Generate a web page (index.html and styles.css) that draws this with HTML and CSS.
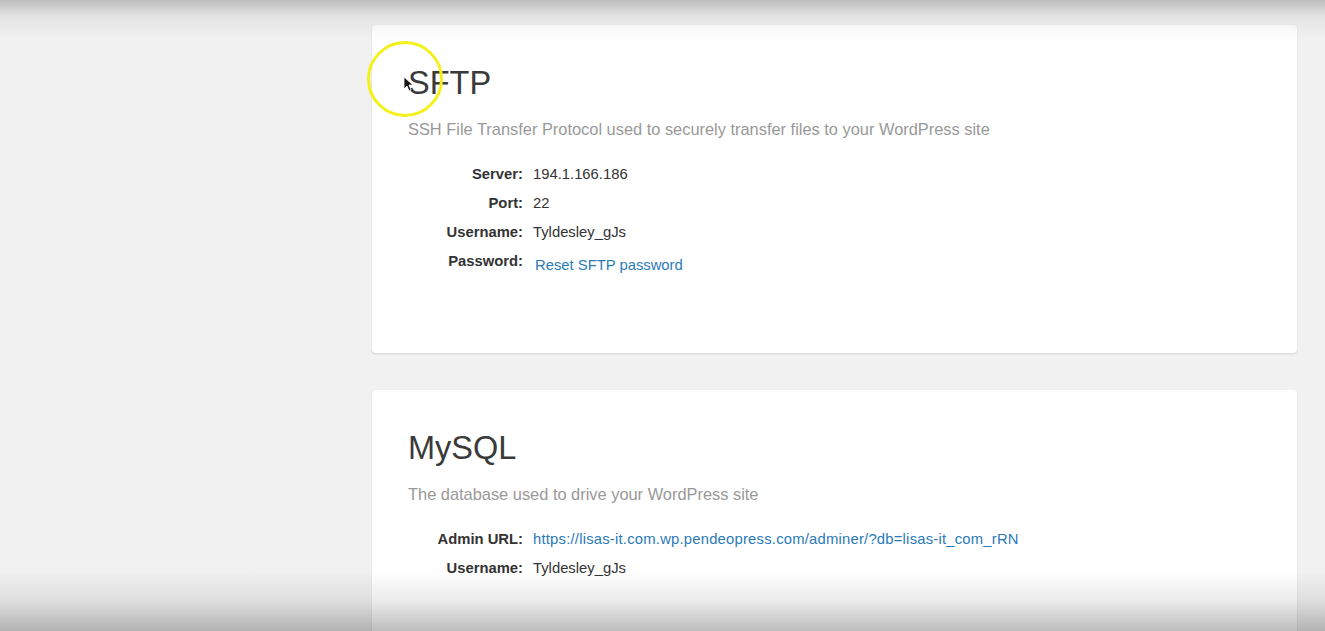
FILE: index.html
```html
<!DOCTYPE html>
<html lang="en">
<head>
  <meta charset="UTF-8">
  <meta name="viewport" content="width=device-width, initial-scale=1.0">
  <title>SFTP &amp; MySQL</title>
  <link rel="stylesheet" href="styles.css">
</head>
<body>

<div class="page">
  <div class="content">

    <!-- SFTP access -->
    <div class="panel panel-sftp">
      <h2>SFTP</h2>
      <p class="lead">SSH File Transfer Protocol used to securely transfer files to your WordPress site</p>

      <dl class="details">
        <dt>Server:</dt>
        <dd>194.1.166.186</dd>
        <dt>Port:</dt>
        <dd>22</dd>
        <dt>Username:</dt>
        <dd>Tyldesley_gJs</dd>
        <dt>Password:</dt>
        <dd><a href="#" class="btn-link">Reset SFTP password</a></dd>
      </dl>
    </div>

    <!-- Database access -->
    <div class="panel">
      <h2>MySQL</h2>
      <p class="lead">The database used to drive your WordPress site</p>

      <dl class="details">
        <dt>Admin URL:</dt>
        <dd><a href="#" class="url">https://lisas-it.com.wp.pendeopress.com/adminer/?db=lisas-it_com_rRN</a></dd>
        <dt>Username:</dt>
        <dd>Tyldesley_gJs</dd>
      </dl>
    </div>

  </div>
</div>

<!-- cursor highlight -->
<div class="cursor-ring"></div>
<svg class="cursor" width="10" height="16" viewBox="0 0 10 16">
  <path d="M1 1 L1 13 L4 10 L6 15 L8 14 L6 9 L10 9 Z" fill="#111" stroke="#fff" stroke-width="0.8"/>
</svg>

<div class="shade shade-top"></div>
<div class="shade shade-bottom"></div>

</body>
</html>
```

FILE: styles.css
```css
body {
  font-family: "Liberation Sans", Arial, sans-serif;
  background-color: #f1f1f1;
  margin: 0;
  padding: 0;
  height: 631px;
  overflow: hidden;
  color: #333;
}

.page {
  padding: 25px 28px 0 372px;
}

.content {
  display: flex;
  flex-direction: column;
  gap: 37px;
}

.panel {
  background-color: #fff;
  border-radius: 4px;
  box-shadow: 0 1px 2px rgba(0, 0, 0, 0.12);
  padding: 40px 36px 60px;
}

.panel-sftp {
  height: 328px;
  box-sizing: border-box;
}

h2 {
  margin: 0;
  font-size: 32.5px;
  font-weight: 400;
  color: #3a3a3a;
  line-height: 36px;
}

.lead {
  margin: 18px 0 0;
  font-size: 16.4px;
  color: #999;
  line-height: 20px;
}

.details {
  display: grid;
  grid-template-columns: 115px auto;
  column-gap: 10px;
  row-gap: 12px;
  margin: 27px 0 0;
  font-size: 14.8px;
  line-height: 17px;
}

.details dt {
  text-align: right;
  font-weight: bold;
  color: #333;
}

.details dd {
  margin: 0;
  color: #333;
}

a {
  color: #2a7ab8;
  text-decoration: none;
}

.btn-link {
  display: inline-block;
  padding: 4px 2px 0;
}

.url {
  letter-spacing: 0.22px;
}

.cursor-ring {
  position: absolute;
  left: 367px;
  top: 41px;
  width: 76px;
  height: 76px;
  border: 3.5px solid #f3f01a;
  border-radius: 50%;
  box-sizing: border-box;
}

.cursor {
  position: absolute;
  left: 403px;
  top: 76px;
}

.shade {
  position: absolute;
  left: 0;
  right: 0;
  pointer-events: none;
}

.shade-top {
  top: 0;
  height: 40px;
  background: linear-gradient(rgba(0, 0, 0, 0.22), rgba(0, 0, 0, 0.06) 40%, rgba(0, 0, 0, 0));
}

.shade-bottom {
  bottom: 0;
  height: 60px;
  background: linear-gradient(rgba(0, 0, 0, 0), rgba(0, 0, 0, 0.08) 50%, rgba(0, 0, 0, 0.26));
}
```
